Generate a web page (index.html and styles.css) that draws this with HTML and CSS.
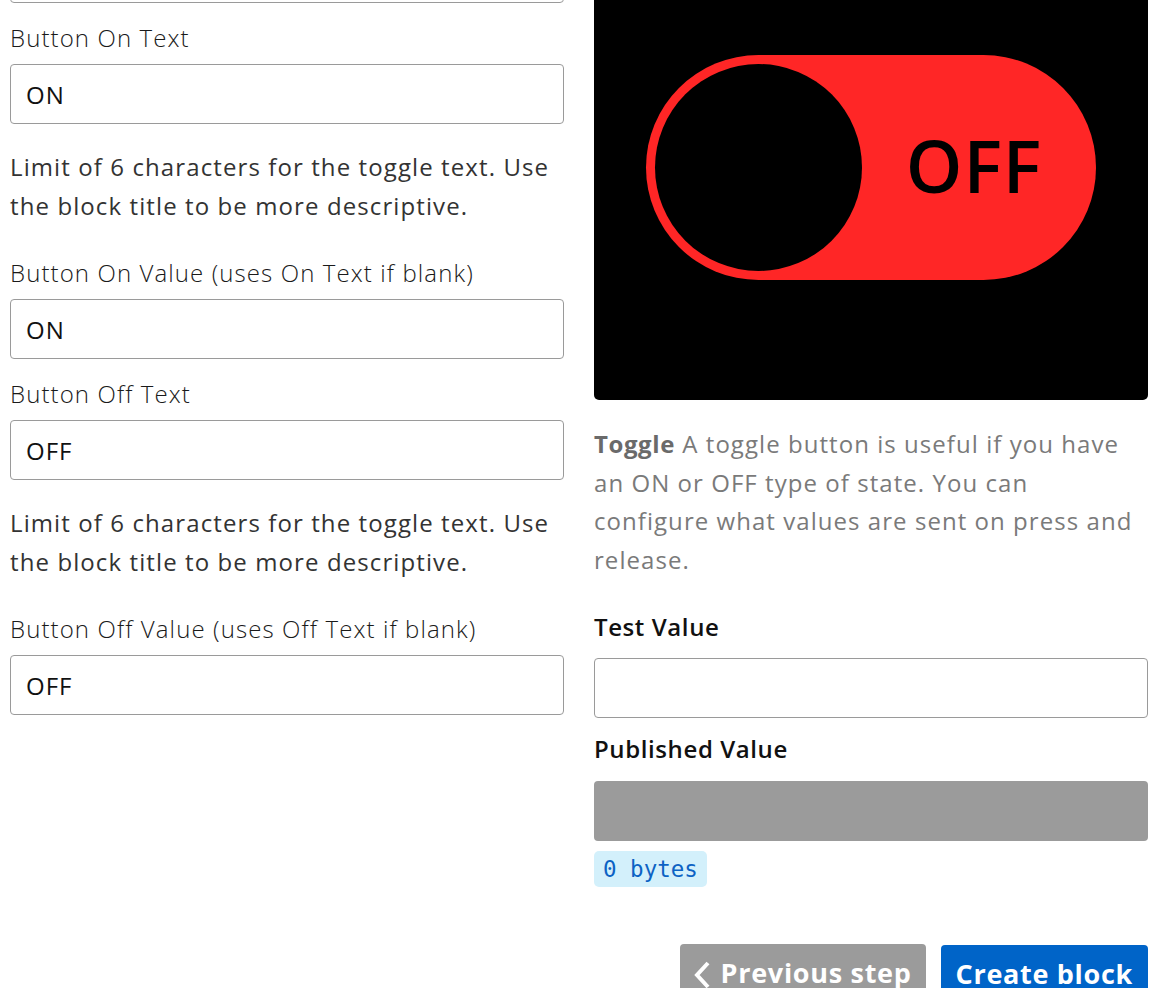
FILE: index.html
```html
<!DOCTYPE html>
<html lang="en">
<head>
<meta charset="utf-8">
<title>Create block - Toggle</title>
<link rel="stylesheet" href="styles.css">
</head>
<body>
<main class="page">
  <section class="col col-left">
    <div class="group">
      <input class="field" type="text" value="">
    </div>
    <div class="group">
      <label class="label">Button On Text</label>
      <input class="field" type="text" value="ON">
    </div>
    <p class="help">Limit of 6 characters for the toggle text. Use the block title to be more descriptive.</p>
    <div class="group">
      <label class="label">Button On Value (uses On Text if blank)</label>
      <input class="field" type="text" value="ON">
    </div>
    <div class="group">
      <label class="label">Button Off Text</label>
      <input class="field" type="text" value="OFF">
    </div>
    <p class="help">Limit of 6 characters for the toggle text. Use the block title to be more descriptive.</p>
    <div class="group">
      <label class="label">Button Off Value (uses Off Text if blank)</label>
      <input class="field" type="text" value="OFF">
    </div>
  </section>

  <section class="col col-right">
    <div class="preview">
      <div class="toggle">
        <div class="knob"></div>
        <div class="toggle-text">OFF</div>
      </div>
    </div>
    <p class="desc"><strong>Toggle</strong> A toggle button is useful if you have an ON or OFF type of state. You can configure what values are sent on press and release.</p>
    <label class="label-strong">Test Value</label>
    <input class="field field-test" type="text" value="">
    <label class="label-strong">Published Value</label>
    <div class="published"></div>
    <span class="bytes">0 bytes</span>
    <div class="actions">
      <button class="btn btn-prev" type="button">
        <svg class="chev" width="18" height="28" viewBox="0 0 18 28"><polyline points="15,2 4,14 15,26" fill="none" stroke="#fff" stroke-width="4" stroke-linecap="butt" stroke-linejoin="miter"/></svg>
        <span>Previous step</span>
      </button>
      <button class="btn btn-create" type="button">Create block</button>
    </div>
  </section>
</main>
</body>
</html>
```

FILE: styles.css
```css
html, body {
  margin: 0;
  padding: 0;
  background: #ffffff;
}

body {
  font-family: "Open Sans", "Liberation Sans", sans-serif;
  color: #222;
  overflow: hidden;
}

.page {
  display: grid;
  grid-template-columns: 554px 554px;
  column-gap: 30px;
  padding: 0 27px 0 10px;
  margin-top: -57px;
  align-items: start;
}

.col {
  display: flex;
  flex-direction: column;
}

.group {
  display: flex;
  flex-direction: column;
  margin-bottom: 16px;
}

.label {
  font-size: 24px;
  font-weight: 300;
  letter-spacing: 1.1px;
  line-height: 38px;
  color: #1a1a1a;
  margin-bottom: 7px;
}

.field {
  box-sizing: border-box;
  width: 100%;
  height: 60px;
  border: 1px solid #9a9a9a;
  border-radius: 4px;
  padding: 0 15px;
  font-family: "Open Sans", "Liberation Sans", sans-serif;
  font-size: 24px;
  letter-spacing: 1px;
  color: #111;
  background: #fff;
  outline: none;
}

.help {
  margin: 8px 0 29px;
  font-size: 24px;
  font-weight: 400;
  letter-spacing: 1.1px;
  line-height: 38.5px;
  color: #333;
}

.preview {
  box-sizing: border-box;
  height: 457px;
  background: #000;
  border-radius: 0 0 5px 5px;
  padding-top: 112px;
  display: flex;
  justify-content: center;
  align-items: flex-start;
}

.toggle {
  width: 450px;
  height: 225px;
  border-radius: 113px;
  background: #ff2626;
  display: flex;
  align-items: center;
  box-sizing: border-box;
  padding-left: 9px;
}

.knob {
  width: 207px;
  height: 207px;
  border-radius: 50%;
  background: #000;
  flex: none;
}

.toggle-text {
  flex: 1;
  text-align: center;
  font-size: 72px;
  font-weight: 600;
  letter-spacing: 1px;
  color: #000;
  line-height: 1;
  padding-right: 10px;
  margin-top: -5px;
}

.desc {
  margin: 25px 0 29px;
  font-size: 24px;
  letter-spacing: 1.05px;
  line-height: 38.6px;
  color: #7a7a7a;
}

.desc strong {
  color: #6a6a6a;
  font-weight: 700;
  letter-spacing: 0.6px;
}

.label-strong {
  font-size: 24px;
  font-weight: 600;
  letter-spacing: 0.6px;
  line-height: 38px;
  color: #111;
  margin-bottom: 12px;
}

.field-test {
  margin-bottom: 12px;
}

.published {
  height: 60px;
  background: #9b9b9b;
  border-radius: 4px;
  margin-top: 1px;
}

.bytes {
  align-self: flex-start;
  margin-top: 10px;
  height: 36px;
  line-height: 37px;
  padding: 0 9px;
  background: #d3f0fb;
  border-radius: 5px;
  font-family: "DejaVu Sans Mono", "Liberation Mono", monospace;
  font-size: 22.5px;
  color: #0c62c4;
}

.actions {
  display: flex;
  justify-content: flex-end;
  gap: 15px;
  margin-top: 57px;
}

.btn {
  height: 60px;
  border: none;
  border-radius: 4px;
  color: #fff;
  font-family: "Open Sans", "Liberation Sans", sans-serif;
  font-size: 27px;
  font-weight: 700;
  letter-spacing: 0.7px;
  white-space: nowrap;
  padding: 10px 15px 0;
  display: flex;
  align-items: flex-start;
  gap: 10px;
}

.btn-prev {
  background: #9b9b9b;
  padding-left: 13px;
  padding-right: 14px;
}

.chev {
  margin-top: 7px;
  flex: none;
}

.btn-create {
  background: #0064c8;
  margin-top: 1px;
  justify-content: center;
}
```
